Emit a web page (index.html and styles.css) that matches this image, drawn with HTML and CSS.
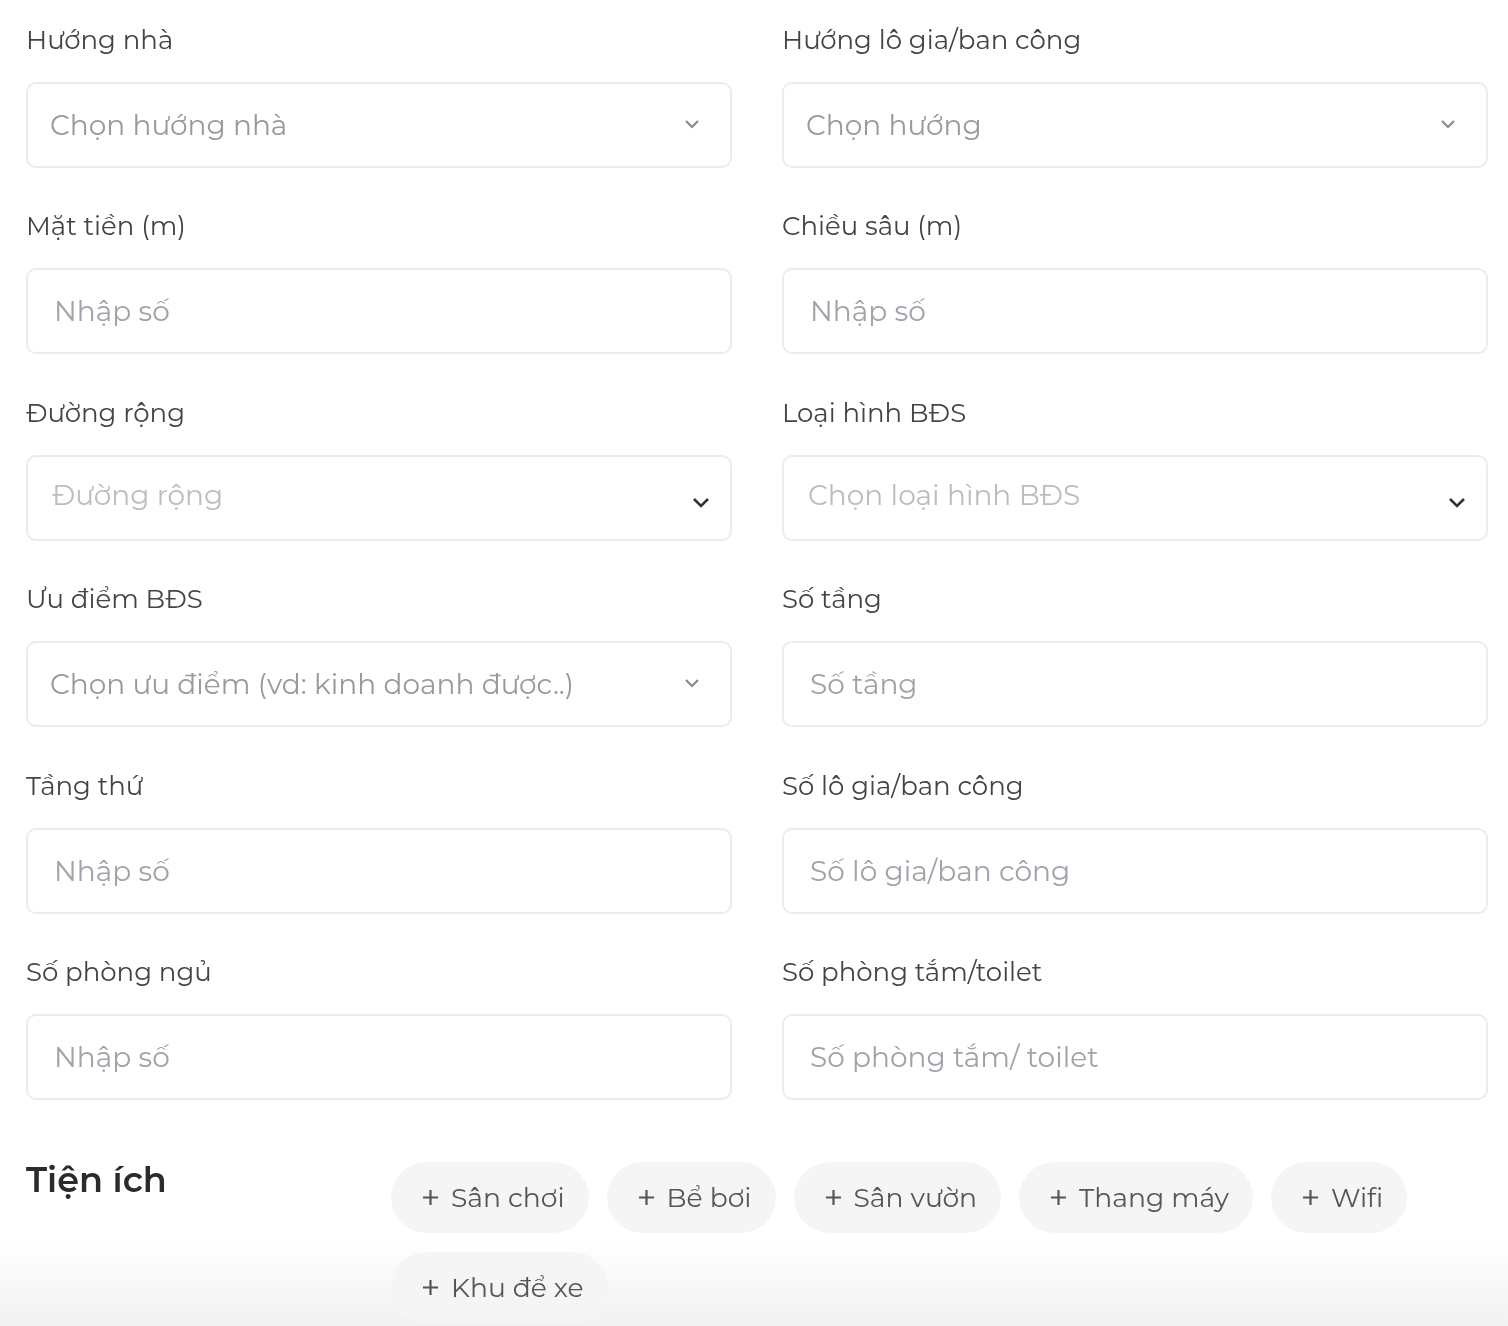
FILE: index.html
```html
<!DOCTYPE html>
<html lang="vi">
<head>
  <meta charset="UTF-8" />
  <title>Thông tin BĐS</title>
  <link rel="stylesheet" href="styles.css">
</head>
<body>
  <div class="container">
    <div class="form-grid">
      <div class="field">
        <label>Hướng nhà</label>
        <div class="select">
          <span>Chọn hướng nhà</span>
          <svg class="chev" width="16" height="10" viewBox="0 0 16 10"><path d="M2 2l6 6 6-6" /></svg>
        </div>
      </div>
      <div class="field">
        <label>Hướng lô gia/ban công</label>
        <div class="select">
          <span>Chọn hướng</span>
          <svg class="chev" width="16" height="10" viewBox="0 0 16 10"><path d="M2 2l6 6 6-6" /></svg>
        </div>
      </div>

      <div class="field">
        <label>Mặt tiền (m)</label>
        <input type="text" placeholder="Nhập số">
      </div>
      <div class="field">
        <label>Chiều sâu (m)</label>
        <input type="text" placeholder="Nhập số">
      </div>

      <div class="field">
        <label>Đường rộng</label>
        <div class="select light">
          <span>Đường rộng</span>
          <svg class="chev dark" width="18" height="12" viewBox="0 0 18 12"><path d="M2 3l7 7 7-7" /></svg>
        </div>
      </div>
      <div class="field">
        <label>Loại hình BĐS</label>
        <div class="select light">
          <span>Chọn loại hình BĐS</span>
          <svg class="chev dark" width="18" height="12" viewBox="0 0 18 12"><path d="M2 3l7 7 7-7" /></svg>
        </div>
      </div>

      <div class="field">
        <label>Ưu điểm BĐS</label>
        <div class="select">
          <span>Chọn ưu điểm (vd: kinh doanh được..)</span>
          <svg class="chev" width="16" height="10" viewBox="0 0 16 10"><path d="M2 2l6 6 6-6" /></svg>
        </div>
      </div>
      <div class="field">
        <label>Số tầng</label>
        <input type="text" placeholder="Số tầng">
      </div>

      <div class="field">
        <label>Tầng thứ</label>
        <input type="text" placeholder="Nhập số">
      </div>
      <div class="field">
        <label>Số lô gia/ban công</label>
        <input type="text" placeholder="Số lô gia/ban công">
      </div>

      <div class="field">
        <label>Số phòng ngủ</label>
        <input type="text" placeholder="Nhập số">
      </div>
      <div class="field">
        <label>Số phòng tắm/toilet</label>
        <input type="text" placeholder="Số phòng tắm/ toilet">
      </div>
    </div>

    <div class="amenities">
      <h3>Tiện ích</h3>
      <div class="chips">
        <button class="chip"><svg class="plus" width="17" height="17" viewBox="0 0 17 17"><path d="M8.5 1v15M1 8.5h15" /></svg>Sân chơi</button>
        <button class="chip"><svg class="plus" width="17" height="17" viewBox="0 0 17 17"><path d="M8.5 1v15M1 8.5h15" /></svg>Bể bơi</button>
        <button class="chip"><svg class="plus" width="17" height="17" viewBox="0 0 17 17"><path d="M8.5 1v15M1 8.5h15" /></svg>Sân vườn</button>
        <button class="chip"><svg class="plus" width="17" height="17" viewBox="0 0 17 17"><path d="M8.5 1v15M1 8.5h15" /></svg>Thang máy</button>
        <button class="chip"><svg class="plus" width="17" height="17" viewBox="0 0 17 17"><path d="M8.5 1v15M1 8.5h15" /></svg>Wifi</button>
        <button class="chip"><svg class="plus" width="17" height="17" viewBox="0 0 17 17"><path d="M8.5 1v15M1 8.5h15" /></svg>Khu để xe</button>
      </div>
    </div>
  </div>
  <div class="bottom-fade"></div>
</body>
</html>
```

FILE: styles.css
```css
* {
  box-sizing: border-box;
  margin: 0;
  padding: 0;
  font-family: 'Montserrat', 'DejaVu Sans', sans-serif;
}

body {
  background: #fff;
  overflow: hidden;
}

.container {
  position: relative;
  z-index: 1;
  padding: 22px 20px 0 26px;
}

.form-grid {
  display: grid;
  grid-template-columns: 1fr 1fr;
  column-gap: 50px;
  row-gap: 40.4px;
}

.field label {
  display: block;
  font-size: 26px;
  line-height: 36px;
  color: #444;
  margin-bottom: 24px;
}

.field input,
.select {
  width: 100%;
  height: 86px;
  border: 2px solid #ececec;
  border-radius: 10px;
  background: #fff;
  font-size: 28px;
  color: #333;
}

.field input {
  padding: 0 26px;
  outline: none;
}

.field input::placeholder {
  color: #a2a2aa;
}

.select {
  display: flex;
  align-items: center;
  justify-content: space-between;
  padding: 0 30px 0 22px;
  color: #9a9a9a;
}

.select.light {
  color: #bdbdbd;
  padding: 0 20px 0 24px;
}

.select.light span {
  margin-top: -6px;
}

.chev {
  margin-top: -2px;
}

.chev path {
  fill: none;
  stroke: #8a8a8a;
  stroke-width: 2.2;
}

.chev.dark {
  margin-top: 8px;
}

.chev.dark path {
  stroke: #333;
  stroke-width: 2.6;
}

.amenities {
  display: flex;
  margin-top: 62px;
}

.amenities h3 {
  width: 365px;
  flex-shrink: 0;
  font-size: 35px;
  font-weight: 600;
  color: #2b2b2b;
  line-height: 36px;
}

.chips {
  display: flex;
  flex-wrap: wrap;
  gap: 19px 18px;
  max-width: 1060px;
}

.chip {
  display: flex;
  align-items: center;
  height: 71px;
  padding: 0 24px 0 31px;
  border: none;
  border-radius: 36px;
  background: #f5f5f5;
  font-size: 26.6px;
  color: #555;
  cursor: pointer;
}

.chip .plus {
  flex-shrink: 0;
  margin-right: 12px;
}

.chip .plus path {
  stroke: #555;
  stroke-width: 2.2;
}

.bottom-fade {
  position: fixed;
  left: 0;
  right: 0;
  bottom: 0;
  height: 90px;
  background: linear-gradient(rgba(243, 243, 243, 0), #f2f2f2);
  pointer-events: none;
}
```
